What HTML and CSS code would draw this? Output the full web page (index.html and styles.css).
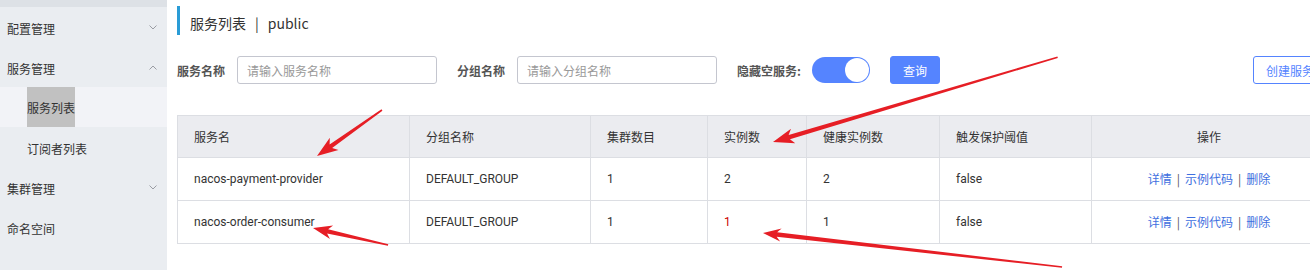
FILE: index.html
```html
<!DOCTYPE html>
<html lang="zh-CN">
<head>
<meta charset="utf-8">
<title>服务列表</title>
<link rel="stylesheet" href="styles.css">
</head>
<body>
<div class="page">
  <aside class="sidebar">
    <div class="sidebar-top"></div>
    <ul class="menu">
      <li class="menu-item">配置管理
        <svg class="chev" viewBox="0 0 8 5" width="8" height="5"><polyline points="0.5,0.5 4,4 7.5,0.5"/></svg>
      </li>
      <li class="menu-item">服务管理
        <svg class="chev" viewBox="0 0 8 5" width="8" height="5"><polyline points="0.5,4.5 4,1 7.5,4.5"/></svg>
      </li>
      <li class="menu-item sub active"><span class="sel">服务列表</span></li>
      <li class="menu-item sub">订阅者列表</li>
      <li class="menu-item">集群管理
        <svg class="chev" viewBox="0 0 8 5" width="8" height="5"><polyline points="0.5,0.5 4,4 7.5,0.5"/></svg>
      </li>
      <li class="menu-item">命名空间</li>
    </ul>
  </aside>
  <main class="main">
    <div class="title">服务列表<span class="title-sep">|</span>public</div>
    <form class="search">
      <label class="label">服务名称</label>
      <input class="input" type="text" placeholder="请输入服务名称">
      <label class="label gap">分组名称</label>
      <input class="input" type="text" placeholder="请输入分组名称">
      <label class="label gap">隐藏空服务:</label>
      <span class="switch"><span class="knob"></span></span>
      <button type="button" class="btn primary">查询</button>
      <button type="button" class="btn outline">创建服务</button>
    </form>
    <table class="grid">
      <colgroup>
        <col class="c1"><col class="c2"><col class="c3"><col class="c4"><col class="c5"><col class="c6"><col class="c7">
      </colgroup>
      <thead>
        <tr><th>服务名</th><th>分组名称</th><th>集群数目</th><th>实例数</th><th>健康实例数</th><th>触发保护阈值</th><th class="center">操作</th></tr>
      </thead>
      <tbody>
        <tr>
          <td>nacos-payment-provider</td><td>DEFAULT_GROUP</td><td>1</td><td>2</td><td>2</td><td>false</td>
          <td class="center"><a class="link">详情</a><span class="sep">|</span><a class="link">示例代码</a><span class="sep">|</span><a class="link">删除</a></td>
        </tr>
        <tr>
          <td>nacos-order-consumer</td><td>DEFAULT_GROUP</td><td>1</td><td class="warn">1</td><td>1</td><td>false</td>
          <td class="center"><a class="link">详情</a><span class="sep">|</span><a class="link">示例代码</a><span class="sep">|</span><a class="link">删除</a></td>
        </tr>
      </tbody>
    </table>
  </main>
  <svg class="annot" width="1310" height="270" viewBox="0 0 1310 270">
    <g fill="#e61e25">
      <polygon transform="translate(317,156) rotate(144.7)" points="0,0 -21,-7.5 -17,-2.2 -79.6,-0.8 -79.6,0.8 -17,2.2 -21,7.5"/>
      <polygon transform="translate(773,142) rotate(163.4)" points="0,0 -21,-7.5 -17,-2.3 -297,-0.8 -297,0.8 -17,2.3 -21,7.5"/>
      <polygon transform="translate(313,228) rotate(-167.2)" points="0,0 -19,-7 -15,-2.2 -77,-0.8 -77,0.8 -15,2.2 -19,7"/>
      <polygon transform="translate(763,233) rotate(-173.5)" points="0,0 -18,-6.5 -14,-2.3 -301,-0.8 -301,0.8 -14,2.3 -18,6.5"/>
    </g>
  </svg>
</div>
</body>
</html>
```

FILE: styles.css
```css
* { box-sizing: border-box; }
html, body { margin: 0; padding: 0; }
body {
  width: 1310px;
  height: 270px;
  overflow: hidden;
  background: #fff;
  font-family: "Noto Sans CJK SC", "Noto Sans", sans-serif;
  font-size: 12px;
  color: #333;
}
.page {
  position: relative;
  display: flex;
  width: 1326px;
  height: 270px;
}
.sidebar {
  width: 167px;
  flex: none;
  background: #eaedf1;
  height: 270px;
}
.sidebar-top {
  height: 7px;
  background: #dde1e6;
}
.menu {
  list-style: none;
  margin: 1px 0 0;
  padding: 0;
}
.menu-item {
  position: relative;
  height: 40px;
  line-height: 42px;
  padding-left: 7px;
  font-size: 12px;
  color: #333;
}
.menu-item.sub { padding-left: 27px; }
.menu-item.active { background: #f2f3f7; margin-top: -1px; margin-bottom: 1px; }
.sel {
  display: inline-block;
  background: #c1c1c1;
  height: 40px;
}
.chev {
  position: absolute;
  right: 10px;
  top: 17px;
  fill: none;
  stroke: #9a9ca3;
  stroke-width: 1;
}
.main {
  flex: 1;
  padding-left: 10px;
}
.title {
  margin-top: 6px;
  height: 29px;
  border-left: 3px solid #2a9cd6;
  padding: 7px 0 0 10px;
  font-size: 14px;
  line-height: 20px;
  color: #333;
}
.title-sep { margin: 0 9px; }
.search {
  display: flex;
  align-items: center;
  margin: 21px 0 0;
  height: 28px;
}
.label {
  font-weight: bold;
  color: #555;
  margin-right: 12px;
  white-space: nowrap;
}
.label.gap { margin-left: 20px; }
.input {
  width: 200px;
  height: 28px;
  border: 1px solid #c4c6cf;
  border-radius: 3px;
  padding: 0 9px;
  font: inherit;
  font-size: 12px;
  color: #333;
  outline: none;
}
.input::placeholder { color: #999; }
.switch {
  display: flex;
  justify-content: flex-end;
  align-items: center;
  width: 58px;
  height: 26px;
  border-radius: 13px;
  background: #5584ff;
  padding: 1px;
  margin-left: -1px;
}
.knob {
  width: 24px;
  height: 24px;
  border-radius: 50%;
  background: #fff;
}
.btn {
  height: 28px;
  border-radius: 3px;
  font: inherit;
  font-size: 12px;
  padding: 0 12px;
  cursor: pointer;
}
.btn.primary {
  margin-left: 20px;
  width: 50px;
  padding: 0;
  background: #5584ff;
  border: 1px solid #5584ff;
  color: #fff;
}
.btn.outline {
  margin-left: auto;
  background: #fff;
  border: 1px solid #5584ff;
  color: #5584ff;
  width: 74px;
  white-space: nowrap;
}
.grid {
  margin-top: 31px;
  width: 1149px;
  border-collapse: collapse;
  table-layout: fixed;
}
.c1 { width: 232px; }
.c2 { width: 181px; }
.c3 { width: 117px; }
.c4 { width: 99px; }
.c5 { width: 133px; }
.c6 { width: 152px; }
.c7 { width: 235px; }
.grid th, .grid td {
  border: 1px solid #dcdee3;
  padding: 0 0 0 16px;
  text-align: left;
  font-weight: normal;
  color: #333;
  white-space: nowrap;
}
.grid td {
  font-family: Roboto, "Noto Sans CJK SC", sans-serif;
  height: 43px;
  padding-bottom: 1px;
}
.grid th {
  height: 42px;
  background: #ebecf0;
}
.grid .center { text-align: center; padding: 0; }
.grid td.center { font-family: "Noto Sans CJK SC", sans-serif; padding-bottom: 1px; }
.grid td.warn { color: #c00; }
.link { color: #3e6fe0; }
.sep { color: #555; margin: 0 5px; }
.annot {
  position: absolute;
  left: 0;
  top: 0;
  pointer-events: none;
}
```
